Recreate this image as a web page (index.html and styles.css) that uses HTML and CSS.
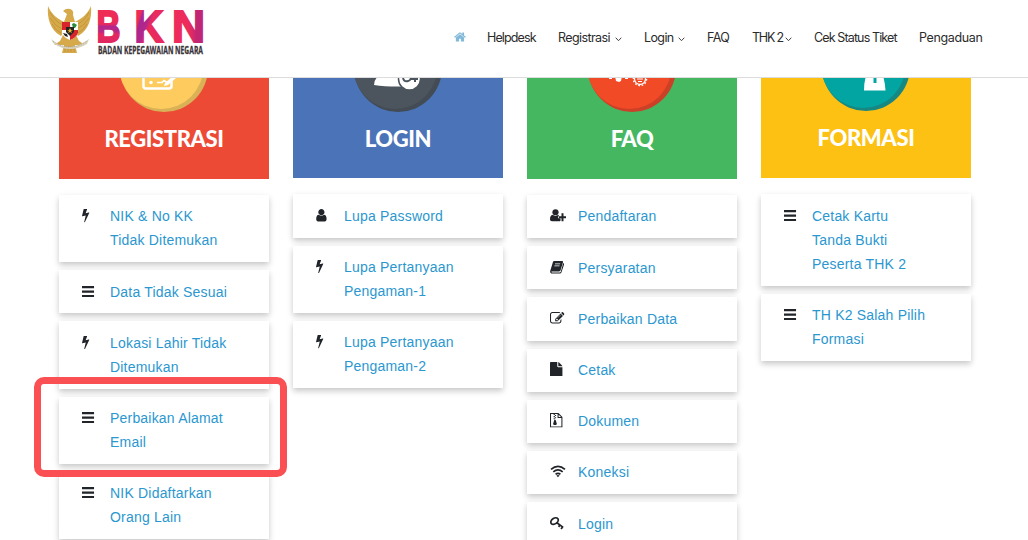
FILE: index.html
```html
<!DOCTYPE html>
<html lang="id">
<head>
    <meta charset="UTF-8">
    <meta name="viewport" content="width=device-width, initial-scale=1.0">
    <title>Helpdesk BKN</title>
    <link rel="stylesheet" href="styles.css">
</head>
<body>
    <!-- Icon set -->
    <svg class="sprite">
        <symbol id="bolt" viewBox="448 0 1792 1792"><path d="M1333 566q18 20 7 44l-540 1157q-13 25-42 25-4 0-14-2-17-5-25.500-19t-4.500-30l197-808-406 101q-4 1-12 1-18 0-31-11-18-15-13-39l201-825q4-16 18-26t33-10h328q19 0 32 12.500t13 29.500q0 8-5 18l-171 463 396-98q8-2 12-2 19 0 34 15z"/></symbol>
        <symbol id="bars" viewBox="128 0 1792 1792"><path d="M128 250h1490v270H128zM128 800h1490v270H128zM128 1350h1490v270H128z"/></symbol>
        <symbol id="user" viewBox="230 0 1792 1792"><path d="M1536 1399q0 109-62.500 187t-150.500 78h-854q-88 0-150.500-78t-62.500-187q0-85 8.500-160.500t31.500-152 58.500-131 94-89 134.500-34.500q131 128 313 128t313-128q76 0 134.500 34.500t94 89 58.500 131 31.500 152 8.500 160.500zm-256-887q0 159-112.500 271.500t-271.500 112.500-271.500-112.500-112.500-271.500 112.500-271.500 271.500-112.500 271.500 112.500 112.500 271.500z"/></symbol>
        <symbol id="user-plus" viewBox="0 0 16 14"><circle cx="5.500" cy="4" r="3.100"/><path d="M2.600 6.600C.8 7 0 8.800 0 11c0 1.300.8 2 1.900 2h7.300c.7 0 1-.3 1.300-.6V10H8.200V8h.8c-.2-.7-.4-1.200-.7-1.400-1.600 1.400-4 1.400-5.700 0z"/><path d="M11.500 5h2v3H16v2h-2.500v3h-2v-3H9V8h2.500z"/></symbol>
        <symbol id="book" viewBox="0 0 14 14"><path fill-rule="evenodd" d="M4.300 1h7.200c.9 0 1.300.6 1 1.500L10.200 10c-.2.700-.7 1-1.500 1H2c-.5 0-.7.200-.6.500.1.400.5.600 1 .6h7c.5 0 .8-.2 1-.7L12.800 3c.8.300.9.800.7 1.500l-2.400 7.300c-.3.900-.9 1.300-1.800 1.300H2.100C.7 13.100-.2 11.700.2 10.500L2.700 2.300C3 1.500 3.500 1 4.300 1zM4.900 3.300l-.2.7h5l.2-.7zM4.300 5.300l-.2.700h5l.2-.7z"/></symbol>
        <symbol id="edit" viewBox="0 0 1792 1792"><path d="M888 1184l116-116-152-152-116 116v56h96v96h56zm440-720q-16-16-33 1l-350 350q-17 17-1 33t33-1l350-350q17-17 1-33zm80 594v190q0 119-84.500 203.500t-203.500 84.500h-832q-119 0-203.500-84.500t-84.500-203.500v-832q0-119 84.500-203.500t203.500-84.500h832q63 0 117 25 15 7 18 23 3 17-9 29l-49 49q-14 14-32 8-23-6-45-6h-832q-66 0-113 47t-47 113v832q0 66 47 113t113 47h832q66 0 113-47t47-113v-126q0-13 9-22l64-64q15-15 35-7t20 29zm-96-738l288 288-672 672h-288v-288zm444 132l-92 92-288-288 92-92q28-28 68-28t68 28l152 152q28 28 28 68t-28 68z"/></symbol>
        <symbol id="file" viewBox="0 0 14 14"><path d="M0 .8Q0 0 .8 0H7v4.200q0 .8.800.8H12v8.200q0 .8-.8.800H.8Q0 14 0 13.200zM8 .1Q8.500.3 8.800.6l2.600 2.600q.3.300.5.800H8z"/></symbol>
        <symbol id="zip" viewBox="0 0 14 14"><path fill="none" stroke="#212529" d="M.5.500H8L11.500 4v9.500H.5zM7.800.5v3.800h3.700"/><path d="M3.500 1h1.200v1H3.500zM4.700 2h1.200v1H4.700zM3.500 3h1.200v1H3.500zM4.700 4h1.200v1H4.700zM3.500 5h1.200v1H3.500zM4.200 6.500h1.200l1.200 3.800c.3 1.800-3.900 1.800-3.600 0z"/></symbol>
        <symbol id="wifi" viewBox="0 0 16 14"><path fill="none" stroke="#212529" stroke-width="1.700" d="M1 5.200Q8-1 15 5.200M3.300 7.700Q8 3.700 12.700 7.700M5.600 10Q8 8.100 10.400 10"/><path d="M6.400 11.300Q8 10.200 9.600 11.300L8 12.900z"/></symbol>
        <symbol id="key" viewBox="0 0 14 14"><g fill="none" stroke="#212529" stroke-width="1.700"><ellipse cx="4.400" cy="4.900" rx="3.900" ry="2.700" transform="rotate(-35 4.400 4.900)"/><path d="M6.300 6.300l6.400 4.700M8.300 10.500l1.500-2.100M10.700 12.500l1.600-2.200"/></g></symbol>
    </svg>

    <header>
        <svg class="logo" viewBox="0 -5 160 64" width="160" height="64">
            <defs>
                <linearGradient id="pink" x1="0" y1="0" x2="0" y2="1">
                    <stop offset=".25" stop-color="#ee2c56"/><stop offset=".45" stop-color="#e92a5c"/>
                    <stop offset=".5" stop-color="#b3278d"/><stop offset=".6" stop-color="#b82782"/>
                    <stop offset=".66" stop-color="#e4285f"/><stop offset="1" stop-color="#dd2662"/>
                </linearGradient>
                <linearGradient id="pinkK" x1="0" y1="0" x2="1" y2=".6">
                    <stop offset=".25" stop-color="#ee2c56"/><stop offset=".32" stop-color="#a9278f"/>
                    <stop offset=".5" stop-color="#b3278a"/><stop offset=".6" stop-color="#e92a5c"/>
                </linearGradient>
                <linearGradient id="pinkN"><stop offset=".5" stop-color="#ee2c5c"/><stop offset=".75" stop-color="#c12674"/></linearGradient>
            </defs>
            <!-- Garuda -->
            <g fill="#d6a94a">
                <path d="M1 1C0 13 3 25 14 31L18 25 17 17C11 14 4 9 1 1z"/>
                <path d="M44 1C45 13 42 25 31 31L27 25 28 17C34 14 41 9 44 1z"/>
                <path d="M16 6Q19 3 23 4Q27 5 26 10L28 17 30 29 23 34 16 29 17 17 20 9z"/>
                <path d="M17 28L13 36 7 40 17 40 15 48H30L28 40 38 40 32 36 28 28z"/>
            </g>
            <path fill="none" stroke="#b58a31" stroke-width=".6" d="M3 7Q7 16 16 20M3 13Q8 21 15 24M5 19Q9 26 14 28M42 7Q38 16 29 20M42 13Q37 21 30 24M40 19Q36 26 31 28M18 42v5M21 41v6M24 41v6M27 42v5"/>
            <path fill="#d8d2bd" d="M4 34Q13 42 22 42T42 34L40 39Q32 44 23 44T6 38z"/>
            <path fill="none" stroke="#9b9688" stroke-width=".7" stroke-dasharray="1 1" d="M6 36Q14 42 23 42T40 36"/>
            <path fill="#fff" d="M15 17H31V28Q29 33 23 35Q17 33 15 28z"/>
            <path fill="#d8252b" d="M15 17H23V25H15zM23 25H31V28Q29 33 23 35z"/>
            <path fill="#2f8b3d" d="M25 19l2-1 3 2-2 3h-2z"/>
            <path fill="#262320" d="M19 22h8v5l-4 4-4-4zM16 28l4 1 1 3-3-1z"/>
            <path fill="#e3b431" d="M23 23l1 2h2l-2 1 1 2-2-1-2 1 1-2-2-1h2z"/>
            <g class="bkn">
                <text x="49.500" y="37" textLength="24" lengthAdjust="spacingAndGlyphs" fill="url(#pink)" stroke="url(#pink)">B</text>
                <text x="87.500" y="37" textLength="29" lengthAdjust="spacingAndGlyphs" fill="url(#pinkK)" stroke="url(#pinkK)">K</text>
                <text x="125" y="37" textLength="33" lengthAdjust="spacingAndGlyphs" fill="url(#pinkN)" stroke="url(#pinkN)">N</text>
            </g>
            <text class="tagline" x="51" y="49" textLength="105" lengthAdjust="spacingAndGlyphs">BADAN KEPEGAWAIAN NEGARA</text>
        </svg>

        <nav>
            <a href="#" class="home"><svg width="12" height="12" viewBox="60 60 1680 1680"><path d="M1472 992v480q0 26-19 45t-45 19h-384v-384h-256v384h-384q-26 0-45-19t-19-45v-480q0-1 .5-3t.5-3l575-474 575 474q1 2 1 6zm223-69l-62 74q-8 9-21 11h-3q-13 0-21-7l-692-577-692 577q-12 8-24 7-13-2-21-11l-62-74q-8-10-7-23.500t11-21.500l719-599q32-26 76-26t76 26l244 204v-195q0-14 9-23t23-9h192q14 0 23 9t9 23v408l219 182q10 8 11 21.500t-7 23.500z"/></svg></a>
            <a href="#" class="tight">Helpdesk</a>
            <a href="#">Registrasi <svg class="caret" viewBox="0 0 7 5"><path d="M.7.700l2.800 3 2.800-3"/></svg></a>
            <a href="#">Login <svg class="caret" viewBox="0 0 7 5"><path d="M.7.700l2.800 3 2.800-3"/></svg></a>
            <a href="#">FAQ</a>
            <a href="#" class="thk">THK 2 <svg class="caret" viewBox="0 0 7 5"><path d="M.7.700l2.800 3 2.800-3"/></svg></a>
            <a href="#" class="tight">Cek Status Tiket</a>
            <a href="#" class="loose">Pengaduan</a>
        </nav>
    </header>

    <main>
        <section>
            <div class="tile red">
                <svg viewBox="0 0 210 36" width="210" height="36">
                    <circle cx="105" cy="-10" r="44" fill="#d9b257"/>
                    <circle cx="102.300" cy="-11" r="42" fill="#fecb5f"/>
                    <path fill="none" stroke="#fff" stroke-width="2.500" d="M84.500-3V8q0 2.500 2.500 2.500h23q2.500 0 2.500-2.500V3"/>
                    <path fill="none" stroke="#fff" stroke-width="1.600" d="M98 4.500h5l2-2 3 2"/>
                    <circle cx="92" cy="4.500" r="1.700" fill="#fff"/>
                    <path fill="#fff" d="M106 5l8-7 3 2-8 7-4 1z"/>
                </svg>
                <h2>REGISTRASI</h2>
            </div>
            <ul>
                <li><svg class="icon"><use href="#bolt"/></svg><a href="#">NIK &amp; No KK<br>Tidak Ditemukan</a></li>
                <li><svg class="icon"><use href="#bars"/></svg><a href="#">Data Tidak Sesuai</a></li>
                <li><svg class="icon"><use href="#bolt"/></svg><a href="#">Lokasi Lahir Tidak Ditemukan</a></li>
                <li class="marked"><svg class="icon"><use href="#bars"/></svg><a href="#">Perbaikan Alamat Email</a></li>
                <li><svg class="icon"><use href="#bars"/></svg><a href="#">NIK Didaftarkan Orang Lain</a></li>
            </ul>
        </section>

        <section>
            <div class="tile blue">
                <svg viewBox="0 0 210 36" width="210" height="36">
                    <circle cx="105" cy="-10" r="44" fill="#434b54"/>
                    <circle cx="102.300" cy="-11" r="42" fill="#4c555d"/>
                    <path fill="#fff" d="M81 7Q81 1 86-2H112V8.500Q94 9 81 7z"/>
                    <circle cx="116.500" cy="1" r="11" fill="#fff" stroke="#4c555d" stroke-width="1.500"/>
                    <path fill="none" stroke="#4c555d" stroke-width="2" d="M110 0q1 4 5 3t2-5M118 1h7M122-3v7"/>
                </svg>
                <h2>LOGIN</h2>
            </div>
            <ul>
                <li><svg class="icon"><use href="#user"/></svg><a href="#">Lupa Password</a></li>
                <li><svg class="icon"><use href="#bolt"/></svg><a href="#">Lupa Pertanyaan Pengaman-1</a></li>
                <li><svg class="icon"><use href="#bolt"/></svg><a href="#">Lupa Pertanyaan Pengaman-2</a></li>
            </ul>
        </section>

        <section>
            <div class="tile green">
                <svg viewBox="0 0 210 36" width="210" height="36">
                    <circle cx="105" cy="-10" r="44" fill="#cd4028"/>
                    <circle cx="102.300" cy="-11" r="42" fill="#f04a26"/>
                    <path fill="#fff" d="M88-2h7l-1 5-2 1-3-1zM82-1h3v2h-3zM98-1h3v2h-3z"/>
                    <circle cx="113" cy="1" r="5.500" fill="none" stroke="#fff" stroke-width="1.300"/>
                    <circle cx="113" cy="1" r="6.600" fill="none" stroke="#fff" stroke-width="1.400" stroke-dasharray="1.700 1.750"/>
                    <path fill="none" stroke="#fff" d="M110 1h6M111 3.500h4"/>
                </svg>
                <h2>FAQ</h2>
            </div>
            <ul>
                <li><svg class="icon wide"><use href="#user-plus"/></svg><a href="#">Pendaftaran</a></li>
                <li><svg class="icon"><use href="#book"/></svg><a href="#">Persyaratan</a></li>
                <li><svg class="icon"><use href="#edit"/></svg><a href="#">Perbaikan Data</a></li>
                <li><svg class="icon"><use href="#file"/></svg><a href="#">Cetak</a></li>
                <li><svg class="icon"><use href="#zip"/></svg><a href="#">Dokumen</a></li>
                <li><svg class="icon wide"><use href="#wifi"/></svg><a href="#">Koneksi</a></li>
                <li><svg class="icon"><use href="#key"/></svg><a href="#">Login</a></li>
            </ul>
        </section>

        <section>
            <div class="tile yellow">
                <svg viewBox="0 0 210 36" width="210" height="36">
                    <circle cx="105" cy="-11" r="44" fill="#178782"/>
                    <circle cx="102.300" cy="-12" r="42" fill="#02a5a1"/>
                    <path fill="#fff" d="M105-2h17q2 6 2.500 14.500h-21.500Q103 4 105-2z"/>
                    <path fill="#02a5a1" d="M112.500-2h3v7h-3z"/>
                </svg>
                <h2>FORMASI</h2>
            </div>
            <ul>
                <li><svg class="icon"><use href="#bars"/></svg><a href="#">Cetak Kartu<br>Tanda Bukti<br>Peserta THK 2</a></li>
                <li><svg class="icon"><use href="#bars"/></svg><a href="#">TH K2 Salah Pilih Formasi</a></li>
            </ul>
        </section>
    </main>
</body>
</html>
```
FILE: styles.css
```css
* {
    box-sizing: border-box;
}

body {
    margin: 0;
    height: 540px;
    overflow: hidden;
    background-color: #fff;
    font-family: 'Liberation Sans', Arial, sans-serif;
}

.sprite {
    display: none;
}

header {
    height: 78px;
    padding: 0 45px 0 47px;
    border-bottom: 1px solid #dcdcdc;
    display: flex;
    justify-content: space-between;
    align-items: flex-start;
}

.logo {
    overflow: visible;
}

.bkn {
    font: bold 44.5px 'Liberation Sans', Arial, sans-serif;
    stroke-width: 2px;
}

.tagline {
    font: bold 10.5px 'Open Sans', sans-serif;
    fill: #3a3338;
    stroke: #3a3338;
    stroke-width: 0.3px;
}

nav {
    display: grid;
    grid-template-columns: 11px 49px 64px 41px 23px 40px 83px 64px;
    column-gap: 22px;
    margin-top: 27px;
}

nav a {
    display: flex;
    justify-content: space-between;
    align-items: center;
    height: 20px;
    color: #2b2b2b;
    font: 12.5px Inter, sans-serif;
    letter-spacing: -0.6px;
    text-decoration: none;
    white-space: nowrap;
}

nav .tight {
    letter-spacing: -0.87px;
}

nav .loose {
    letter-spacing: -0.35px;
}

nav .thk {
    letter-spacing: -1.2px;
}

.home svg {
    fill: #82b9d8;
    flex: none;
}

.caret {
    flex: none;
    width: 7px;
    height: 5px;
    margin-top: 4px;
    fill: none;
    stroke: #444;
}

main {
    display: flex;
    gap: 24px;
    padding-left: 59px;
}

section {
    width: 210px;
}

.tile {
    height: 101px;
    margin-bottom: 16px;
}

.tile svg {
    display: block;
}

.tile h2 {
    margin: 11px 0 0;
    color: #fff;
    font: 900 22px/28px Lato, sans-serif;
    letter-spacing: -0.4px;
    text-align: center;
}

.red {
    background-color: #ed4a36;
}

.blue {
    background-color: #4b73b8;
    height: 100.4px;
}

.green {
    background-color: #45b761;
}

.yellow {
    background-color: #fcc113;
    height: 100.4px;
}

.yellow h2 {
    margin-top: 10px;
}

ul {
    list-style: none;
    margin: 0;
    padding: 0;
}

li {
    position: relative;
    display: flex;
    margin-bottom: 8px;
    padding: 9.4px 23px 9.8px;
    background-color: #fff;
    box-shadow: 0 3px 6px rgba(0, 0, 0, 0.22);
}

.icon {
    flex: none;
    width: 14.5px;
    height: 14.5px;
    margin: 4px 13.5px 0 0;
    fill: #212529;
}

.icon.wide {
    width: 16px;
    margin-right: 12px;
}

li a {
    color: #2b97cf;
    font-size: 14px;
    line-height: 24px;
    letter-spacing: 0.2px;
    text-decoration: none;
}

/* red frame around the highlighted item */
.marked::after {
    content: "";
    box-sizing: border-box;
    position: absolute;
    z-index: 1;
    top: -20px;
    left: -25px;
    width: 253px;
    height: 100px;
    border: 7px solid #fa5054;
    border-radius: 10px;
}
```
